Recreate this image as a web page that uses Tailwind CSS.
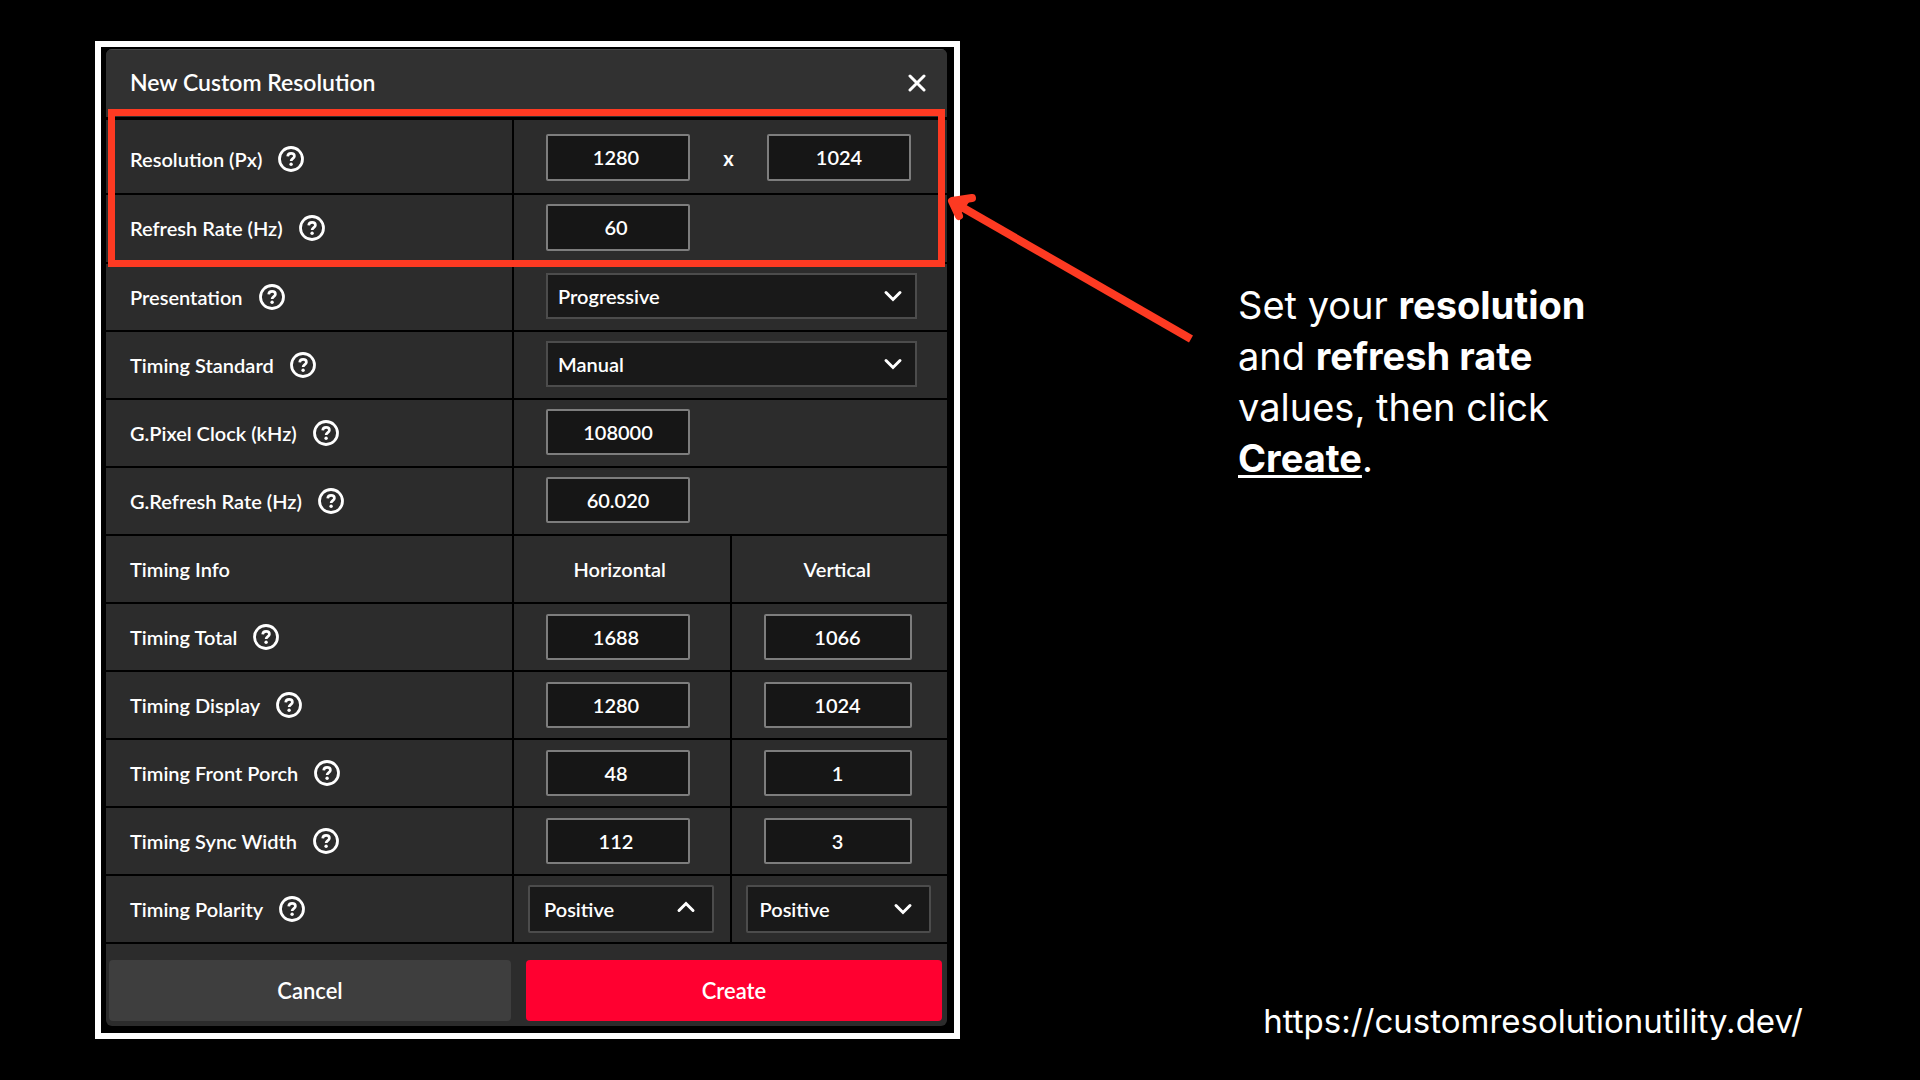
<!DOCTYPE html>
<html lang="en">
<head>
    <meta charset="UTF-8">
    <meta name="viewport" content="width=device-width, initial-scale=1.0">
    <title>New Custom Resolution</title>
    <script src="https://cdn.jsdelivr.net/npm/@tailwindcss/browser@4"></script>
</head>
<body class="bg-black text-white min-h-screen">
    <!-- shared icons -->
    <svg class="hidden">
        <symbol id="help" viewBox="0 0 26 26">
            <circle cx="13" cy="13" r="11.5" fill="none" stroke="currentColor" stroke-width="2.8"/>
            <path d="M9.7 10.4c.1-1.9 1.5-3 3.4-3 1.9 0 3.3 1 3.3 2.8 0 2.4-3.3 2.5-3.3 4.8" fill="none" stroke="currentColor" stroke-width="2.7"/>
            <circle cx="13.1" cy="18.3" r="1.7" fill="currentColor"/>
        </symbol>
        <symbol id="chevron" viewBox="0 0 20 20">
            <path d="M3 6.5l7 7 7-7" fill="none" stroke="currentColor" stroke-width="3" stroke-linecap="round"/>
        </symbol>
    </svg>

    <main class="flex min-h-screen pt-[41px] pl-[95px] font-['Lato',sans-serif] font-semibold">
        <div class="relative w-[865px] max-w-[48%] self-start border-6 border-white bg-black pt-0.5 pr-[7px] pb-[7px] pl-[5px]">
            <form class="overflow-hidden rounded-md bg-[#2c2c2c]">
                <header class="flex h-[71px] items-center justify-between border-t border-b-3 border-t-[#4a4a4a] border-b-black bg-[#313131] pr-[21px] pb-0.5 pl-6">
                    <h1 class="text-[23px]">New Custom Resolution</h1>
                    <button type="button" aria-label="Close">
                        <svg class="size-[18px]" viewBox="0 0 18 18"><path d="M2 2l14 14M16 2L2 16" stroke="currentColor" stroke-width="3" stroke-linecap="round"/></svg>
                    </button>
                </header>

                <table class="w-full table-fixed border-separate border-spacing-0 text-left text-xl">
                    <colgroup>
                        <col class="w-[406px]">
                        <col>
                        <col>
                    </colgroup>
                    <tbody>
                        <tr class="h-[75px]">
                            <th scope="row" class="border-b-2 border-black pt-1 pl-6 font-semibold"><span class="flex items-center gap-4">Resolution (Px) <svg class="size-[26px]"><use href="#help"/></svg></span></th>
                            <td colspan="2" class="border-b-2 border-l-2 border-black pt-0.5 pl-8">
                                <div class="flex items-center">
                                    <input aria-label="Width" value="1280" class="h-[47px] w-36 rounded-xs border-2 border-[#7d7d7d] bg-[#161616] pr-1 pb-0.5 text-center">
                                    <span class="w-[77px] text-center font-bold">x</span>
                                    <input aria-label="Height" value="1024" class="h-[47px] w-36 rounded-xs border-2 border-[#7d7d7d] bg-[#161616] pb-0.5 text-center">
                                </div>
                            </td>
                        </tr>
                        <tr class="h-[69px]">
                            <th scope="row" class="border-b-2 border-black pb-0.5 pl-6 font-semibold"><span class="flex items-center gap-4">Refresh Rate (Hz) <svg class="size-[26px]"><use href="#help"/></svg></span></th>
                            <td colspan="2" class="border-b-2 border-l-2 border-black pb-0.5 pl-8">
                                <input aria-label="Refresh rate" value="60" class="block h-[47px] w-36 rounded-xs border-2 border-[#7d7d7d] bg-[#161616] pr-1 pb-0.5 text-center">
                            </td>
                        </tr>
                        <tr class="h-[68px]">
                            <th scope="row" class="border-b-2 border-black pl-6 font-semibold"><span class="flex items-center gap-4">Presentation <svg class="size-[26px]"><use href="#help"/></svg></span></th>
                            <td colspan="2" class="border-b-2 border-l-2 border-black pr-[30px] pb-0.5 pl-8">
                                <div class="relative">
                                    <select aria-label="Presentation" class="block h-[46px] w-full appearance-none border-2 border-[#4c4c4c] bg-[#191919] pl-2.5"><option>Progressive</option></select>
                                    <svg class="pointer-events-none absolute top-[13px] right-3.5 size-5"><use href="#chevron"/></svg>
                                </div>
                            </td>
                        </tr>
                        <tr class="h-[68px]">
                            <th scope="row" class="border-b-2 border-black pl-6 font-semibold"><span class="flex items-center gap-4">Timing Standard <svg class="size-[26px]"><use href="#help"/></svg></span></th>
                            <td colspan="2" class="border-b-2 border-l-2 border-black pr-[30px] pb-0.5 pl-8">
                                <div class="relative">
                                    <select aria-label="Timing standard" class="block h-[46px] w-full appearance-none border-2 border-[#4c4c4c] bg-[#191919] pl-2.5"><option>Manual</option></select>
                                    <svg class="pointer-events-none absolute top-[13px] right-3.5 size-5"><use href="#chevron"/></svg>
                                </div>
                            </td>
                        </tr>
                        <tr class="h-[68px]">
                            <th scope="row" class="border-b-2 border-black pl-6 font-semibold"><span class="flex items-center gap-4">G.Pixel Clock (kHz) <svg class="size-[26px]"><use href="#help"/></svg></span></th>
                            <td colspan="2" class="border-b-2 border-l-2 border-black pb-0.5 pl-8">
                                <input aria-label="Pixel clock" value="108000" class="block h-[46px] w-36 rounded-xs border-2 border-[#7d7d7d] bg-[#161616] text-center">
                            </td>
                        </tr>
                        <tr class="h-[68px]">
                            <th scope="row" class="border-b-2 border-black pl-6 font-semibold"><span class="flex items-center gap-4">G.Refresh Rate (Hz) <svg class="size-[26px]"><use href="#help"/></svg></span></th>
                            <td colspan="2" class="border-b-2 border-l-2 border-black pb-0.5 pl-8">
                                <input aria-label="Generated refresh rate" value="60.020" class="block h-[46px] w-36 rounded-xs border-2 border-[#7d7d7d] bg-[#161616] text-center">
                            </td>
                        </tr>
                        <tr class="h-[68px]">
                            <th scope="row" class="border-b-2 border-black pl-6 font-semibold">Timing Info</th>
                            <th scope="col" class="border-b-2 border-l-2 border-black pr-1 text-center font-semibold">Horizontal</th>
                            <th scope="col" class="border-b-2 border-l-2 border-black pr-1 text-center font-semibold">Vertical</th>
                        </tr>
                        <tr class="h-[68px]">
                            <th scope="row" class="border-b-2 border-black pl-6 font-semibold"><span class="flex items-center gap-4">Timing Total <svg class="size-[26px]"><use href="#help"/></svg></span></th>
                            <td class="border-b-2 border-l-2 border-black pl-8"><input aria-label="Total horizontal" value="1688" class="block h-[46px] w-36 rounded-xs border-2 border-[#7d7d7d] bg-[#161616] pr-1 text-center"></td>
                            <td class="border-b-2 border-l-2 border-black pl-8"><input aria-label="Total vertical" value="1066" class="block h-[46px] w-[148px] rounded-xs border-2 border-[#7d7d7d] bg-[#161616] text-center"></td>
                        </tr>
                        <tr class="h-[68px]">
                            <th scope="row" class="border-b-2 border-black pl-6 font-semibold"><span class="flex items-center gap-4">Timing Display <svg class="size-[26px]"><use href="#help"/></svg></span></th>
                            <td class="border-b-2 border-l-2 border-black pl-8"><input aria-label="Display horizontal" value="1280" class="block h-[46px] w-36 rounded-xs border-2 border-[#7d7d7d] bg-[#161616] pr-1 text-center"></td>
                            <td class="border-b-2 border-l-2 border-black pl-8"><input aria-label="Display vertical" value="1024" class="block h-[46px] w-[148px] rounded-xs border-2 border-[#7d7d7d] bg-[#161616] text-center"></td>
                        </tr>
                        <tr class="h-[68px]">
                            <th scope="row" class="border-b-2 border-black pl-6 font-semibold"><span class="flex items-center gap-4">Timing Front Porch <svg class="size-[26px]"><use href="#help"/></svg></span></th>
                            <td class="border-b-2 border-l-2 border-black pl-8"><input aria-label="Front porch horizontal" value="48" class="block h-[46px] w-36 rounded-xs border-2 border-[#7d7d7d] bg-[#161616] pr-1 text-center"></td>
                            <td class="border-b-2 border-l-2 border-black pl-8"><input aria-label="Front porch vertical" value="1" class="block h-[46px] w-[148px] rounded-xs border-2 border-[#7d7d7d] bg-[#161616] text-center"></td>
                        </tr>
                        <tr class="h-[68px]">
                            <th scope="row" class="border-b-2 border-black pl-6 font-semibold"><span class="flex items-center gap-4">Timing Sync Width <svg class="size-[26px]"><use href="#help"/></svg></span></th>
                            <td class="border-b-2 border-l-2 border-black pl-8"><input aria-label="Sync width horizontal" value="112" class="block h-[46px] w-36 rounded-xs border-2 border-[#7d7d7d] bg-[#161616] pr-1 text-center"></td>
                            <td class="border-b-2 border-l-2 border-black pl-8"><input aria-label="Sync width vertical" value="3" class="block h-[46px] w-[148px] rounded-xs border-2 border-[#7d7d7d] bg-[#161616] text-center"></td>
                        </tr>
                        <tr class="h-[68px]">
                            <th scope="row" class="border-b-2 border-black pl-6 font-semibold"><span class="flex items-center gap-4">Timing Polarity <svg class="size-[26px]"><use href="#help"/></svg></span></th>
                            <td class="border-b-2 border-l-2 border-black pr-4 pl-3.5">
                                <div class="relative">
                                    <select aria-label="Polarity horizontal" class="block h-12 w-full appearance-none rounded-xs border-2 border-[#4c4c4c] bg-[#191919] pl-3.5"><option>Positive</option></select>
                                    <svg class="pointer-events-none absolute top-3 right-[18px] size-5 rotate-180"><use href="#chevron"/></svg>
                                </div>
                            </td>
                            <td class="border-b-2 border-l-2 border-black pr-4 pl-3.5">
                                <div class="relative">
                                    <select aria-label="Polarity vertical" class="block h-12 w-full appearance-none rounded-xs border-2 border-[#4c4c4c] bg-[#191919] pl-3"><option>Positive</option></select>
                                    <svg class="pointer-events-none absolute top-3.5 right-[18px] size-5"><use href="#chevron"/></svg>
                                </div>
                            </td>
                        </tr>
                    </tbody>
                </table>

                <footer class="grid grid-cols-[402fr_416fr] gap-[15px] pt-4 pr-[5px] pb-[5px] pl-[3px] text-[22px]">
                    <button type="button" class="h-[61px] rounded-sm bg-[#3e3e3e]">Cancel</button>
                    <button type="submit" class="h-[61px] rounded-sm bg-[#ff0030]">Create</button>
                </footer>
            </form>

            <!-- highlight around the two fields and its arrow -->
            <div class="pointer-events-none absolute top-[62px] right-[9px] left-[7px] h-[158px] border-7 border-[#fd3a22]"></div>
            <svg class="pointer-events-none absolute top-[140px] left-full -ml-2 h-[160px] w-[250px]" viewBox="0 0 250 160" fill="none" stroke="#fd3a22">
                <path d="M7 15L245 152" stroke-width="8"/>
                <path d="M13 29L6 14L26 11" fill="#fd3a22" stroke-width="8" stroke-linecap="round" stroke-linejoin="round"/>
            </svg>
        </div>

        <div class="flex flex-1 flex-col justify-between pt-[239px] pr-[117px] pb-[34px] pl-[278px] font-['Inter',sans-serif] font-normal">
            <p class="text-[38px] leading-[51px]">
                Set your <strong>resolution</strong><br>
                and <strong>refresh rate</strong><br>
                values, then click<br>
                <strong class="underline decoration-3 underline-offset-3">Create</strong>.
            </p>
            <a href="https://customresolutionutility.dev/" class="self-end text-[33px]">https://customresolutionutility.dev/</a>
        </div>
    </main>
</body>
</html>
